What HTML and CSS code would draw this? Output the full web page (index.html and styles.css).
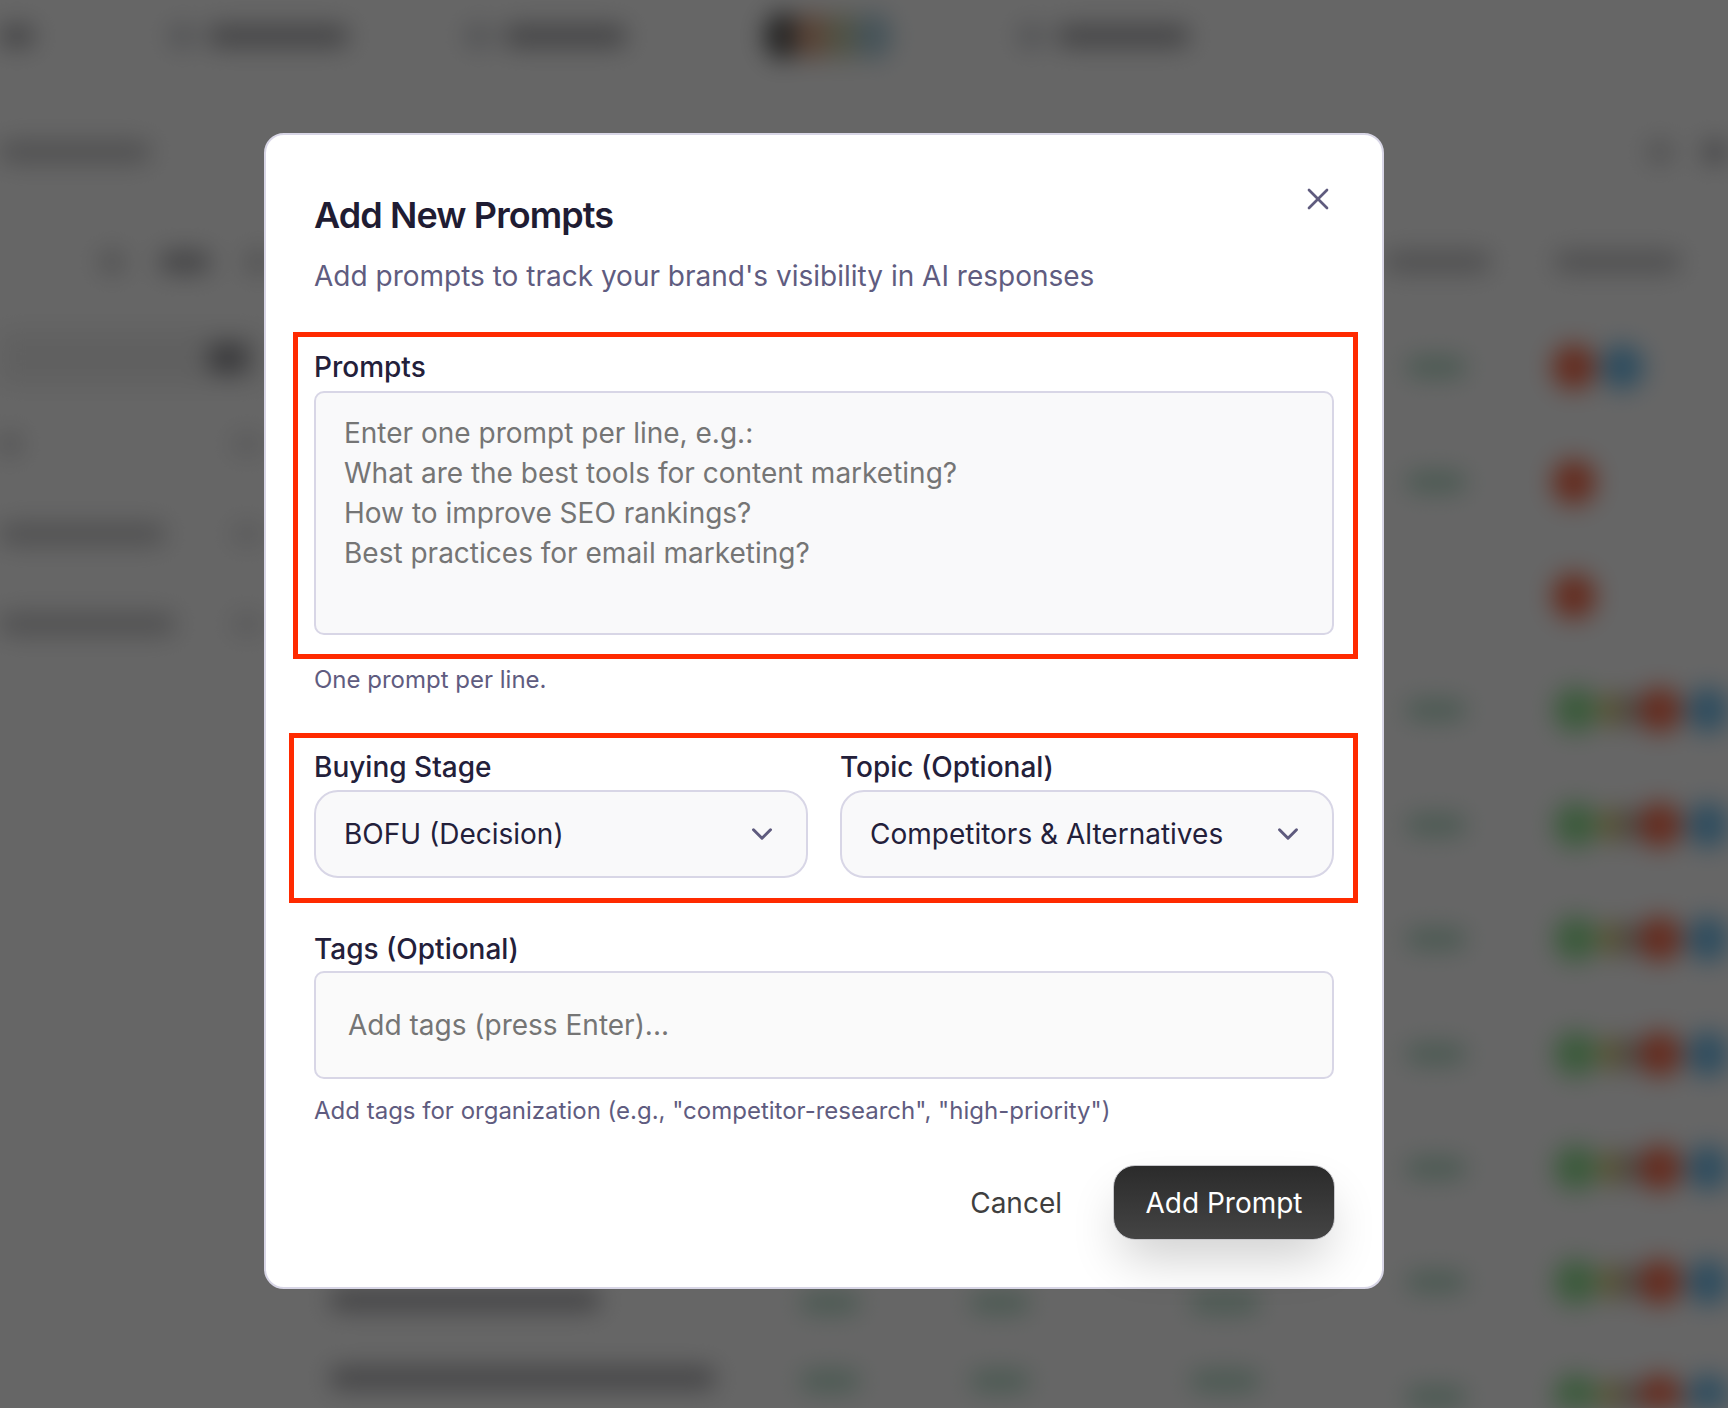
FILE: index.html
```html
<!DOCTYPE html>
<html lang="en">
<head>
<meta charset="utf-8">
<title>Add New Prompts</title>
<link rel="stylesheet" href="styles.css">
</head>
<body>
<div class="app" aria-hidden="true">
  <div class="topbar">
    <div class="blob w-34 dark"></div>
    <div class="blob w-24 slate ml-136"></div><div class="blob w-140 dark ml-14"></div>
    <div class="blob w-24 slate ml-118"></div><div class="blob w-122 dark ml-14"></div>
    <div class="avatars"><i class="av-black"></i><i class="av-orange"></i><i class="av-olive"></i><i class="av-blue"></i></div>
    <div class="blob w-24 slate ml-135"></div><div class="blob w-132 dark ml-14"></div>
  </div>
  <div class="subbar">
    <div class="blob w-150 soft"></div>
    <div class="sub-right"><div class="blob w-24 soft"></div><div class="blob w-24 dark"></div></div>
  </div>
  <div class="thead">
    <div class="blob w-24 soft"></div><div class="blob w-50 dark"></div><div class="blob w-24 soft"></div>
    <div class="th-right"><div class="blob w-105 soft"></div><div class="blob w-125 soft"></div></div>
  </div>
  <div class="table">
    <div class="left-col">
      <div class="band"><div class="blob w-40 darker"></div></div>
      <div class="left-row"><div class="left-text"><div class="blob w-20 soft"></div></div><div class="blob w-30 faint"></div></div>
      <div class="left-row"><div class="left-text"><div class="blob w-165 soft"></div></div><div class="blob w-30 faint"></div></div>
      <div class="left-row"><div class="left-text"><div class="blob w-175 soft"></div></div><div class="blob w-30 faint"></div></div>
      <div class="bottom-row first"><div class="blob w-270 dark"></div><div class="chip w-60 ml-200"></div><div class="chip w-60 ml-110"></div><div class="chip w-70 ml-160"></div></div>
      <div class="bottom-row second"><div class="blob w-385 dark"></div><div class="chip w-60 ml-85"></div><div class="chip w-60 ml-110"></div><div class="chip w-70 ml-160"></div></div>
    </div>
    <div class="right-col">
      <div class="row"><div class="chip w-60"></div><div class="dots"><i class="red"></i><i class="blue"></i></div></div>
      <div class="row"><div class="chip w-60"></div><div class="dots"><i class="red"></i></div></div>
      <div class="row"><div class="chip w-60 off"></div><div class="dots"><i class="red"></i></div></div>
      <div class="row"><div class="chip w-60"></div><div class="dots"><i class="green"></i><i class="tan"></i><i class="grey"></i><i class="red"></i><i class="blue"></i></div></div>
      <div class="row"><div class="chip w-60"></div><div class="dots"><i class="green"></i><i class="tan"></i><i class="grey"></i><i class="red"></i><i class="blue"></i></div></div>
      <div class="row"><div class="chip w-60"></div><div class="dots"><i class="green"></i><i class="tan"></i><i class="grey"></i><i class="red"></i><i class="blue"></i></div></div>
      <div class="row"><div class="chip w-60"></div><div class="dots"><i class="green"></i><i class="tan"></i><i class="grey"></i><i class="red"></i><i class="blue"></i></div></div>
      <div class="row"><div class="chip w-60"></div><div class="dots"><i class="green"></i><i class="tan"></i><i class="grey"></i><i class="red"></i><i class="blue"></i></div></div>
      <div class="row"><div class="chip w-60"></div><div class="dots"><i class="green"></i><i class="tan"></i><i class="grey"></i><i class="red"></i><i class="blue"></i></div></div>
      <div class="row"><div class="chip w-60"></div><div class="dots"><i class="green"></i><i class="tan"></i><i class="grey"></i><i class="red"></i><i class="blue"></i></div></div>
    </div>
  </div>
</div>

<div class="overlay">
  <section class="modal" role="dialog" aria-labelledby="modal-title">
    <button class="close" type="button" aria-label="Close">
      <svg viewBox="0 0 24 24" width="36" height="36" fill="none" stroke="currentColor" stroke-width="1.8" stroke-linecap="round" stroke-linejoin="round"><path d="M18 6 6 18"/><path d="m6 6 12 12"/></svg>
    </button>
    <header class="modal-head">
      <h2 id="modal-title" class="title">Add New Prompts</h2>
      <p class="subtitle">Add prompts to track your brand's visibility in AI responses</p>
    </header>

    <div class="group marked marked-prompts">
      <div class="label">Prompts</div>
      <div class="textarea">Enter one prompt per line, e.g.:
What are the best tools for content marketing?
How to improve SEO rankings?
Best practices for email marketing?</div>
    </div>
    <p class="hint hint-prompts">One prompt per line.</p>

    <div class="two-col marked marked-selects">
      <div class="group group-select">
        <div class="label">Buying Stage</div>
        <div class="select"><span>BOFU (Decision)</span>
          <svg viewBox="0 0 24 24" width="34" height="34" fill="none" stroke="currentColor" stroke-width="2.1" stroke-linecap="round" stroke-linejoin="round"><path d="m6 9 6 6 6-6"/></svg>
        </div>
      </div>
      <div class="group group-select">
        <div class="label">Topic (Optional)</div>
        <div class="select"><span>Competitors &amp; Alternatives</span>
          <svg viewBox="0 0 24 24" width="34" height="34" fill="none" stroke="currentColor" stroke-width="2.1" stroke-linecap="round" stroke-linejoin="round"><path d="m6 9 6 6 6-6"/></svg>
        </div>
      </div>
    </div>

    <div class="group group-tags">
      <div class="label">Tags (Optional)</div>
      <div class="tags-input">Add tags (press Enter)...</div>
    </div>
    <p class="hint hint-tags">Add tags for organization (e.g., "competitor-research", "high-priority")</p>

    <footer class="actions">
      <button class="btn-ghost" type="button">Cancel</button>
      <button class="btn-primary" type="button">Add Prompt</button>
    </footer>
  </section>
</div>
</body>
</html>
```
FILE: styles.css
```css
* { box-sizing: border-box; }
html, body { margin: 0; height: 100%; }
body {
  position: relative;
  width: 1728px;
  height: 1408px;
  overflow: hidden;
  background: #fff;
  font-family: Inter, "Liberation Sans", sans-serif;
  color: #23203a;
}

/* Blurred page behind the dialog */
.app { filter: blur(12px); height: 1408px; overflow: hidden; }
.blob { height: 22px; border-radius: 8px; flex: none; }
.darker { background: #8f8f94; height: 30px; }
.dark { background: #aaaaae; }
.slate { background: #c6c8ce; }
.soft { background: #c8c8ca; }
.faint { background: #e0e0e2; }
.w-20 { width: 20px; }
.w-24 { width: 24px; }
.w-30 { width: 30px; }
.w-34 { width: 34px; }
.w-40 { width: 40px; }
.w-50 { width: 50px; }
.w-60 { width: 60px; }
.w-70 { width: 70px; }
.w-105 { width: 105px; }
.w-122 { width: 122px; }
.w-125 { width: 125px; }
.w-132 { width: 132px; }
.w-140 { width: 140px; }
.w-150 { width: 150px; }
.w-165 { width: 165px; }
.w-175 { width: 175px; }
.w-270 { width: 270px; }
.w-385 { width: 385px; }
.ml-14 { margin-left: 14px; }
.ml-85 { margin-left: 85px; }
.ml-110 { margin-left: 110px; }
.ml-118 { margin-left: 118px; }
.ml-135 { margin-left: 135px; }
.ml-136 { margin-left: 136px; }
.ml-160 { margin-left: 160px; }
.ml-200 { margin-left: 200px; }
.topbar { display: flex; align-items: center; height: 72px; }
.avatars { display: flex; margin-left: 138px; }
.avatars i { width: 38px; height: 48px; border-radius: 50%; margin-right: -8px; flex: none; }
.av-black { background: #5c5c5c; }
.av-orange { background: #e0a888; }
.av-olive { background: #c9cdaa; }
.av-blue { background: #aed0de; }
.subbar { display: flex; align-items: center; justify-content: space-between; height: 72px; margin-top: 44px; padding-right: 0; }
.sub-right { display: flex; gap: 31px; margin-right: 1px; }
.thead { display: flex; align-items: center; gap: 36px; height: 100px; margin-top: 24px; padding-left: 100px; padding-right: 48px; }
.th-right { margin-left: auto; display: flex; gap: 65px; }
.table { display: grid; grid-template-columns: 1406px 322px; }
.left-col { display: flex; flex-direction: column; padding-top: 18px; min-width: 0; }
.band { height: 55px; width: 264px; background: #f0f0f0; display: flex; align-items: center; justify-content: flex-end; padding-right: 16px; margin-bottom: 14px; }
.left-row { display: flex; align-items: center; height: 90px; }
.left-text { width: 232px; display: flex; }
.bottom-row { display: flex; align-items: flex-start; padding-left: 330px; height: 22px; }
.bottom-row.first { margin-top: 620px; }
.bottom-row.second { margin-top: 56px; }
.bottom-row .chip { margin-top: 4px; flex: none; }
.right-col { display: grid; grid-auto-rows: 114.4px; transform: translateY(-2px); }
.row { display: grid; grid-template-columns: 60px auto; align-items: center; column-gap: 88px; }
.chip { height: 20px; border-radius: 10px; background: #b4dcc8; }
.chip.off { background: transparent; }
.dots { display: flex; align-items: center; }
.dots i { display: block; width: 44px; height: 46px; border-radius: 50%; flex: none; }
.dots .tan { width: 24px; margin-left: 2px; height: 36px; }
.dots .grey { width: 20px; margin-left: -4px; height: 36px; }
.dots .red { margin-left: -2px; }
.dots .blue { margin-left: 4px; }
.green { background: #94e294; }
.tan { background: #e1cd78; }
.grey { background: #b7b7b7; }
.red { background: #fb6e4e; }
.blue { background: #74bfec; }

/* Dialog */
.overlay {
  position: absolute;
  inset: 0;
  background: rgba(0, 0, 0, .6);
  display: flex;
  justify-content: center;
  padding: 133px 80px 0 0;
  align-items: flex-start;
}
.modal {
  position: relative;
  width: 1120px;
  height: 1156px;
  padding: 60px 48px 47px;
  background: #fff;
  border: 2px solid #d8d6e6;
  border-radius: 20px;
  display: flex;
  flex-direction: column;
}
.close {
  position: absolute;
  top: 46px;
  right: 46px;
  padding: 0;
  width: 36px;
  height: 36px;
  border: 0;
  background: none;
  color: #5f5b7e;
}
.modal-head { display: flex; flex-direction: column; gap: 21px; }
.title { margin: 0; font-size: 36px; line-height: 40px; font-weight: 600; letter-spacing: -.9px; color: #1f1c33; }
.subtitle { margin: 0; font-size: 28px; line-height: 40px; color: #5f5c80; }
.group { display: flex; flex-direction: column; gap: 4px; min-width: 0; }
.group-select { gap: 3px; }
.label { font-size: 28px; line-height: 40px; font-weight: 500; color: #23203a; }
.marked { position: relative; }
.marked::after { content: ""; position: absolute; border: 5px solid #ff2a00; pointer-events: none; }
.marked-prompts { margin-top: 51px; }
.marked-prompts::after { top: -15px; right: -24px; bottom: -24px; left: -21px; }
.marked-selects::after { top: -14px; right: -24px; bottom: -25px; left: -25px; }
.textarea {
  height: 244px;
  padding: 20px 28px;
  background: #f9f9fa;
  border: 2px solid #d8d6e6;
  border-radius: 10px;
  font-size: 28px;
  line-height: 40px;
  color: #757575;
  white-space: pre-line;
}
.hint { margin: 0; font-size: 24px; line-height: 32px; color: #5f5c80; }
.hint-prompts { margin-top: 29px; }
.two-col { display: grid; grid-template-columns: 1fr 1fr; gap: 32px; margin-top: 51px; }
.select {
  height: 88px;
  padding: 0 27px 0 28px;
  display: flex;
  align-items: center;
  justify-content: space-between;
  background: #f9f9fa;
  border: 2px solid #d8d6e6;
  border-radius: 24px;
  font-size: 28px;
}
.select svg { color: #5f5b7e; flex: none; }
.group-tags { margin-top: 51px; gap: 2px; }
.tags-input {
  height: 108px;
  padding: 0 32px;
  display: flex;
  align-items: center;
  background: #fafafa;
  border: 2px solid #d8d6e6;
  border-radius: 10px;
  font-size: 28px;
  color: #757575;
}
.hint-tags { margin-top: 16px; }
.actions { margin-top: auto; margin-right: -1px; display: flex; justify-content: flex-end; align-items: center; gap: 51px; }
.btn-ghost { padding: 0; border: 0; background: none; font: 400 28px/40px Inter, sans-serif; color: #3f3f3f; }
.btn-primary {
  height: 75px;
  width: 222px;
  border: 1px solid #c8c8cc;
  border-radius: 22px;
  background: linear-gradient(#2b2b2b, #444);
  color: #fff;
  font: 400 28px/40px Inter, sans-serif;
  box-shadow: 0 25px 50px -8px rgba(0, 0, 0, .2);
}
```
